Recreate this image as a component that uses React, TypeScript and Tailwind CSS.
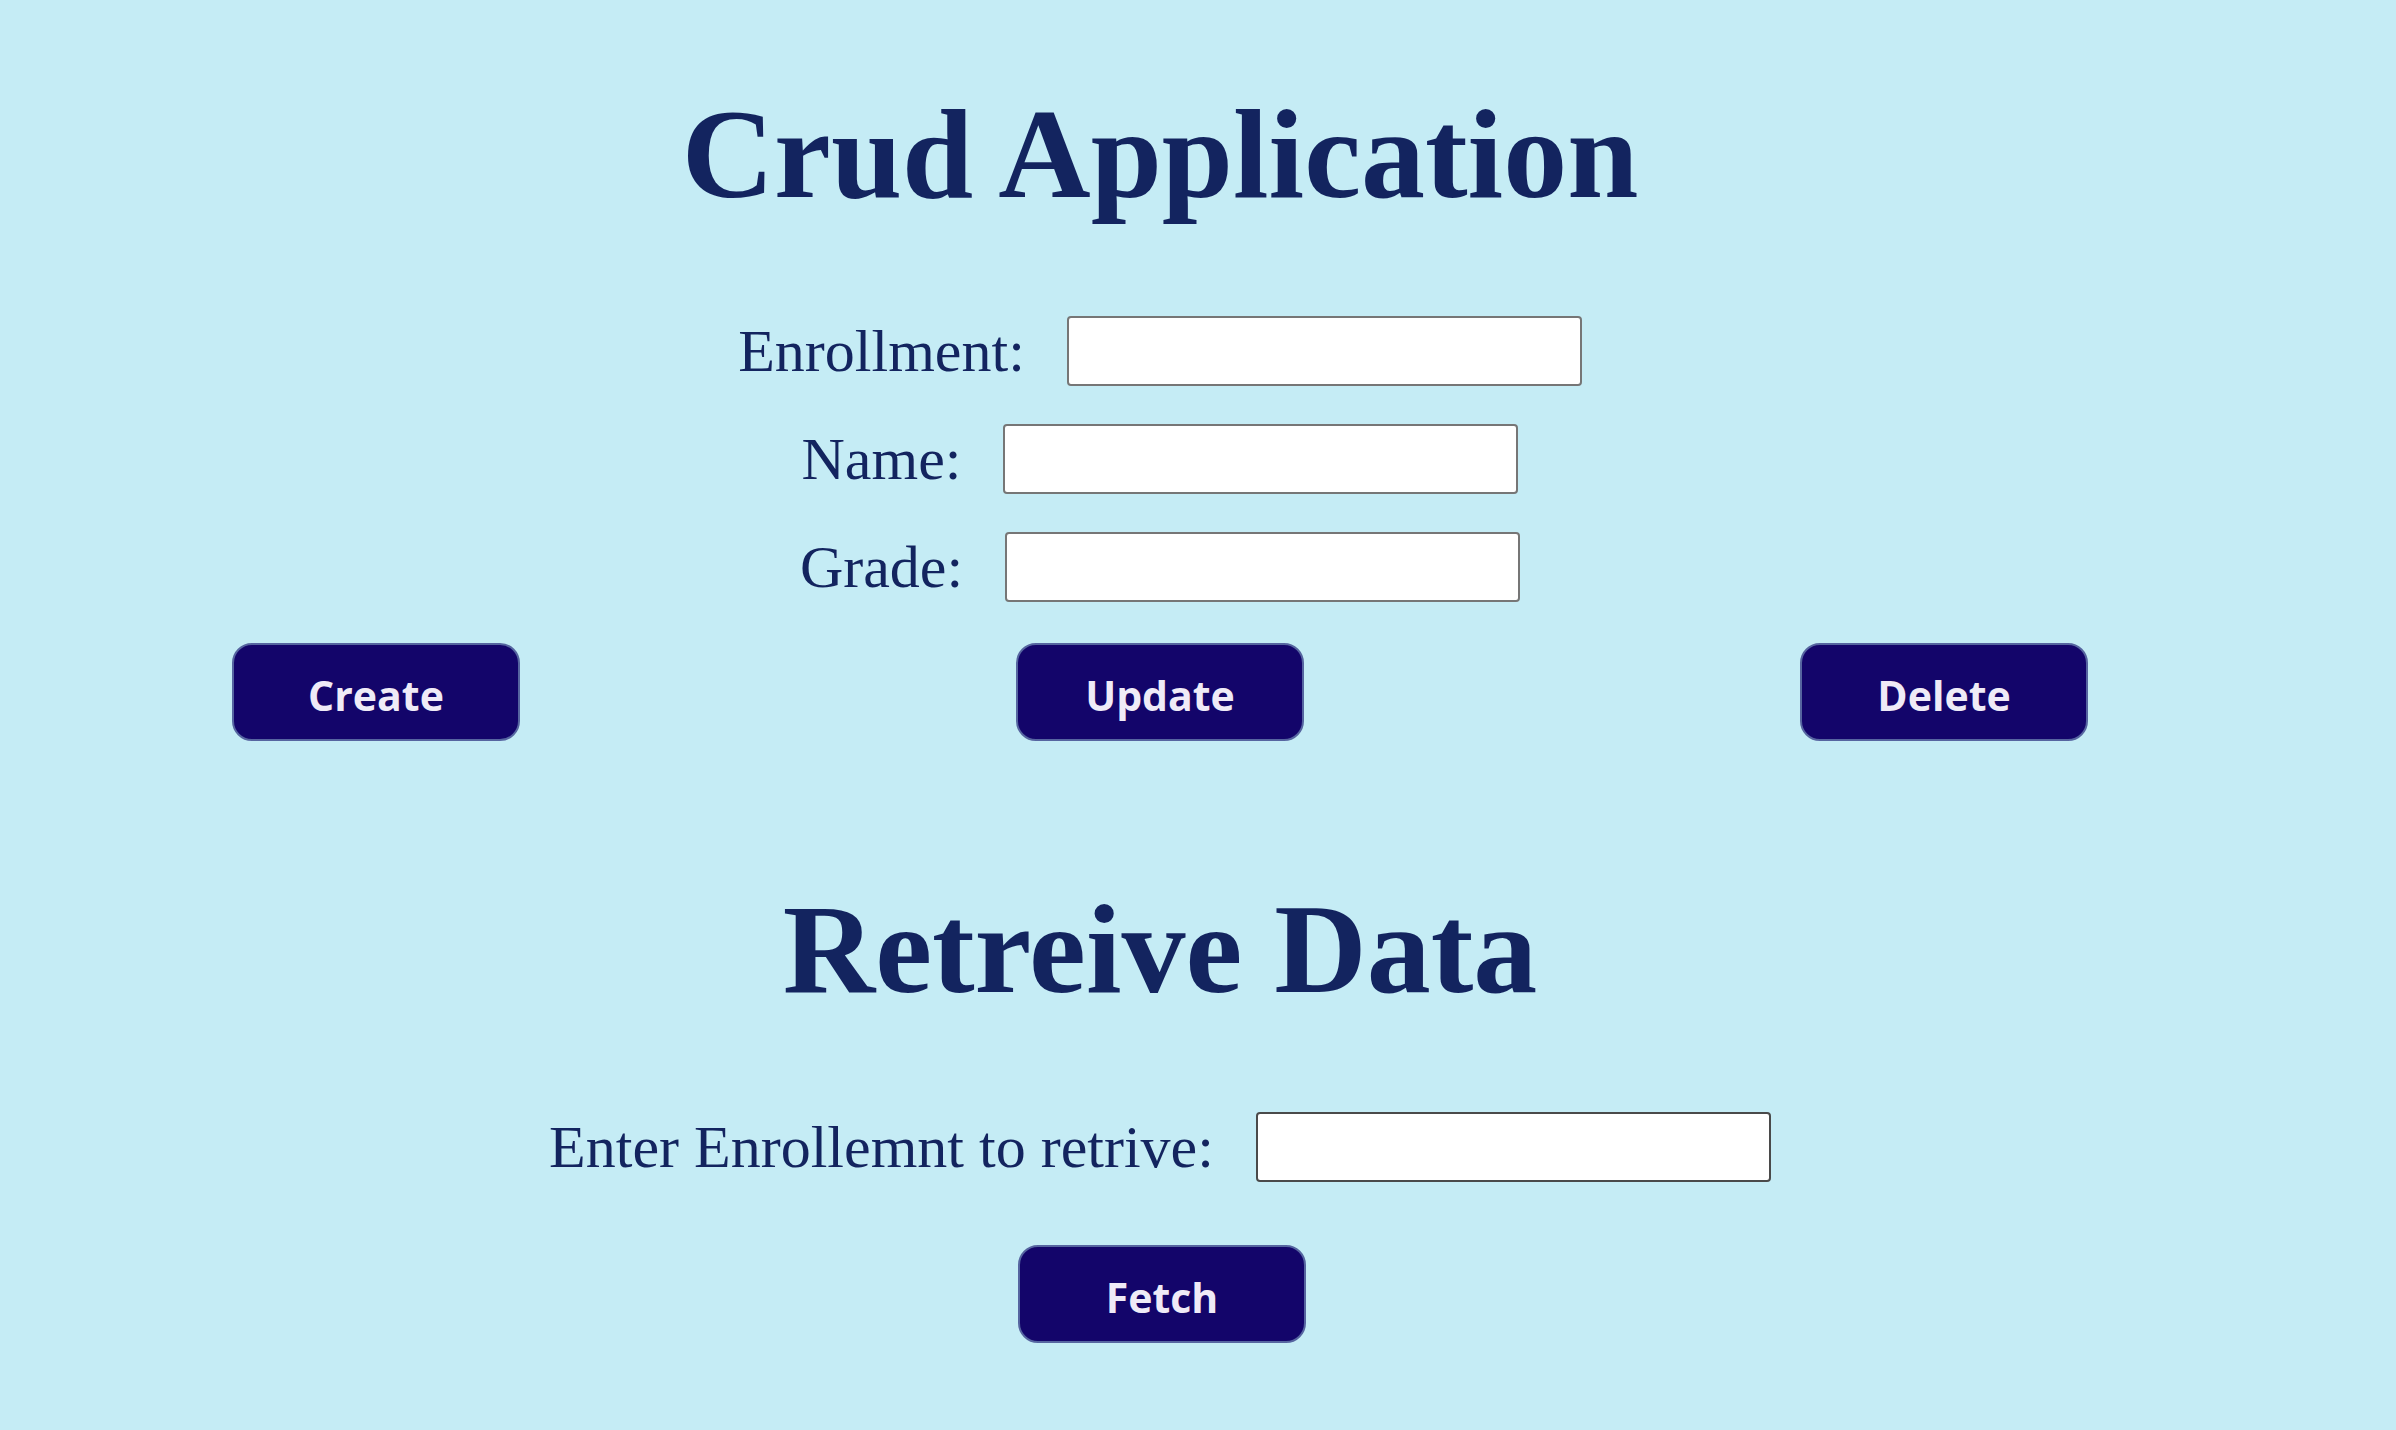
import React from "react";

const serif = { fontFamily: '"Liberation Serif", "Times New Roman", serif' };

function Row({ label, dark }: { label: string; dark?: boolean }) {
  return (
    <div className="flex items-center justify-center gap-[42px] h-[70px]">
      <label className="text-[60px] leading-[70px] text-[#13245f] whitespace-nowrap" style={serif}>
        {label}
      </label>
      <input
        type="text"
        className={
          dark
            ? "w-[515px] h-[70px] bg-white border-2 border-[#4a4a4a] rounded-[4px] outline-none px-2 text-[30px]"
            : "w-[515px] h-[70px] bg-white border-2 border-[#767676] rounded-[4px] outline-none px-2 text-[30px]"
        }
      />
    </div>
  );
}

function Btn({ children }: { children: React.ReactNode }) {
  return (
    <button
      className="w-[288px] h-[98px] rounded-[20px] bg-[#13056a] border-2 border-[#5665a0] text-[#efebf7] text-[41px] font-bold flex items-center justify-center pt-[8px]"
      style={{ fontFamily: '"Open Sans", "Noto Sans", sans-serif' }}
    >
      {children}
    </button>
  );
}

export default function App() {
  return (
    <div className="min-h-screen w-full bg-[#c5ecf5]">
      <div className="w-[2320px] flex flex-col items-center pt-[90px]">
        <h1
          className="text-[128px] leading-[128px] h-[128px] font-bold text-[#13245f] whitespace-nowrap"
          style={serif}
        >
          Crud Application
        </h1>
        <div className="mt-[98px] flex flex-col gap-[38px]">
          <Row label="Enrollment:" />
          <Row label="Name:" />
          <Row label="Grade:" />
        </div>
        <div className="mt-[41px] flex justify-center gap-[496px]">
          <Btn>Create</Btn>
          <Btn>Update</Btn>
          <Btn>Delete</Btn>
        </div>
        <h1
          className="mt-[144px] text-[128px] leading-[128px] h-[128px] font-bold text-[#13245f] whitespace-nowrap"
          style={serif}
        >
          Retreive Data
        </h1>
        <div className="mt-[99px]">
          <Row label="Enter Enrollemnt to retrive:" dark />
        </div>
        <div className="mt-[63px] pl-[4px]">
          <Btn>Fetch</Btn>
        </div>
      </div>
    </div>
  );
}
